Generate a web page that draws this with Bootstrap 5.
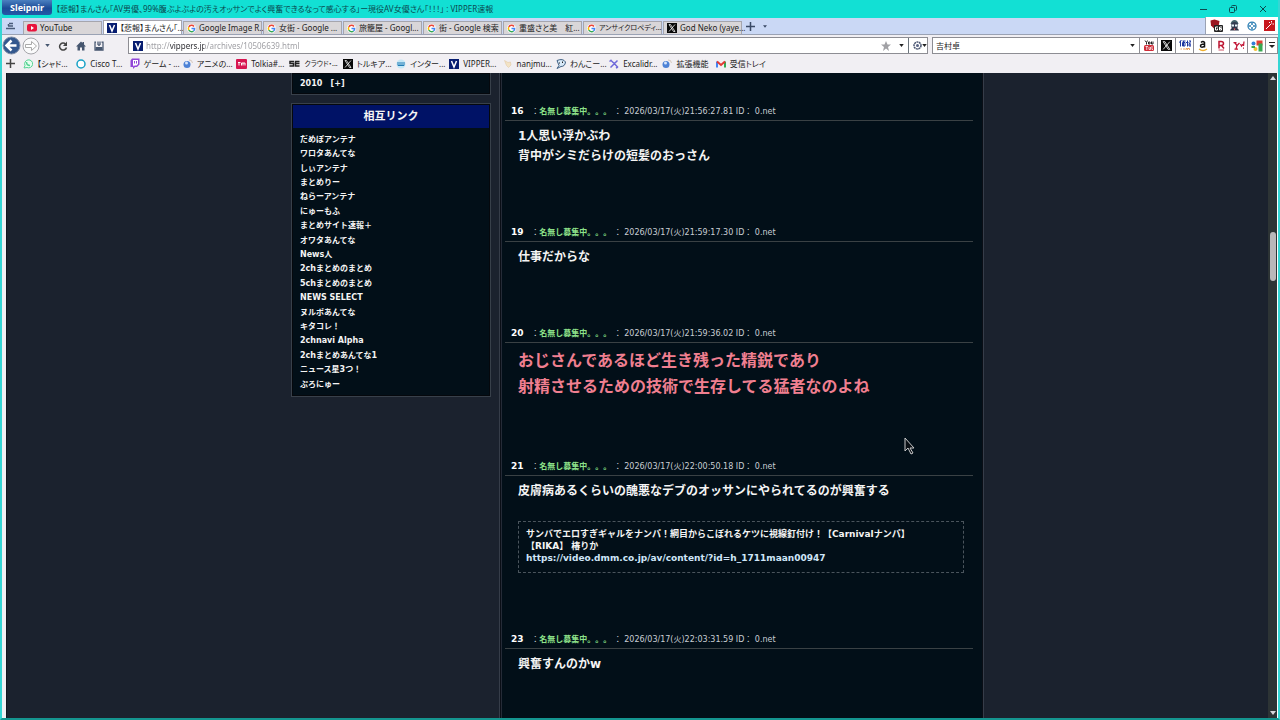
<!DOCTYPE html>
<html lang="ja">
<head>
<meta charset="utf-8">
<meta name="viewport" content="width=device-width, initial-scale=1">
<title>VIPPER速報</title>
<link href="https://cdn.jsdelivr.net/npm/bootstrap@5.3.0/dist/css/bootstrap.min.css" rel="stylesheet">
<style>
  :root { --teal:#12e0d4; --ui:"Noto Sans","Noto Sans CJK JP",sans-serif; --page:"DejaVu Sans","Noto Sans CJK JP",sans-serif; }
  body { background:#f1eff3; font-family:var(--ui); font-size:8px; line-height:12px; color:#222; font-feature-settings:"palt"; }
  a, a:hover { color:inherit; text-decoration:none; }
  button { border:0; background:none; padding:0; color:inherit; display:flex; align-items:center; justify-content:center; }
  svg { display:block; flex:none; }
  .win { border:solid #35d6d4; border-width:0 2px 2px; border-bottom-color:#14958f; }
  .titlebar { background:var(--teal); height:18px; font-size:8px; color:#0b4a50; }
  .brand { width:50px; height:15px; background:linear-gradient(#4b80c0,#1c4a96 55%,#2459a8); border-radius:0 0 3px 3px; color:#fff; font-weight:700; font-size:9px; }
  .winbtn { width:30px; height:18px; color:#0b4a50; }
  .tabbar { height:17px; background:#cad8f5; border-bottom:1px solid #9aa2b4; }
  .tabs { gap:1px; }
  .tab-i { width:79px; height:13px; padding:0 1px 0 3px; gap:3px; background:#d9d6d8; border:1px solid #a5a5ad; border-bottom:0; }
  .tab-i.on { background:#fff; height:14px; }
  .tab-i.dense, .marks-grid .dense { font-size:7px; }
  .addons { background:#fff; width:73px; border-left:1px solid #9aa2b4; padding:0 3px 0 4px; height:17px; }
  .tools { height:20px; padding:2px 0 1px; }
  .navs { width:126px; color:#46566f; }
  .field { background:#fff; border:1px solid #8d8d93; height:17px; }
  .field input { border:0; outline:0; min-width:0; font-size:8px; line-height:12px; padding:0 3px; color:#222; background-color:transparent; }
  .field .url { background:linear-gradient(90deg,#9a9a9f 27px,#26262b 27px 61px,#9a9a9f 61px); -webkit-background-clip:text; background-clip:text; color:transparent; }
  .search { width:346px; }
  .search button { width:18px; height:15px; border-left:1px solid #8d8d93; flex:none; }
  .search .more { width:12px; }
  .marks { height:18px; }
  .marks-grid { display:grid; grid-template-columns:repeat(14,minmax(0,1fr)); width:746px; }
  .marks-grid a { display:flex; align-items:center; gap:4px; min-width:0; }
  .view { background:#1b222e; margin-left:4px; border-left:1px solid #10151d; font-family:var(--page); color:#f4f4f4; font-feature-settings:normal; }
  .site { width:693px; gap:8px; }
  .side { width:200px; font-size:8px; font-weight:700; line-height:14px; }
  .main-col { background:#020f18; border:solid #363d49; border-width:0 1px; box-shadow:inset 1px 0 #0a0e16, inset 2px 0 #252b37, inset -1px 0 #0a0e16; padding:27px 10px 0 5px; }
  .panel { background:#020f18; border:1px solid #38404a; box-shadow:inset 0 0 0 1px #05080d; padding:1px; }
  .years { height:22px; border-top:0; line-height:14px; padding:0 9px 3px 8px; }
  .panel h2 { background:#001266; font-size:11px; line-height:22px; font-weight:700; margin:0 0 5px; padding-top:1px; text-align:center; }
  .mutual { min-height:259px; padding:0 7px; margin:0 0 3px; }
  .post { margin-bottom:55px; }
  .post header { height:21px; border-bottom:1px solid #3a4144; padding-left:6px; font-size:8px; line-height:22px; color:#c9ced4; white-space:pre; }
  .post header b { font-size:9px; color:#fff; }
  .post header .who { color:#8ee28a; font-weight:700; }
  .post .txt { padding:5px 9px 0 13px; font-size:12px; line-height:20px; font-weight:700; margin:0; }
  .post .txt.big { font-size:16px; line-height:26px; color:#f07f90; }
  .ad { margin:20px 9px 0 13px; border:1px dashed #4a545c; padding:6px 7px 7px; font-size:9px; line-height:12px; min-height:52px; font-weight:700; }
  .ad a { color:#cfe6f8; display:block; line-height:13px; }
  .bar { width:9px; background:#2d3435; color:#d6d6da; padding:3px 0; }
  .bar .up { flex:151 0 0; } .bar .down { flex:427 0 0; }
  .thumb { width:6px; flex:49 0 0; background:#b9b7b9; border-radius:3px; }
  .pointer { position:absolute; left:calc(50% + 264px); top:437px; }
  .edge { width:1px; background:#fff; }
</style>
</head>
<body>
<svg width="0" height="0" class="position-absolute" aria-hidden="true">
  <symbol id="g" viewBox="0 0 18 18"><circle cx="9" cy="9" r="9" fill="#fff"/><g fill="none" stroke-width="3"><path d="M14 5A6.2 6.2 0 0 0 3.600 6" stroke="#ea4335"/><path d="M3.600 6A6.200 6.200 0 0 0 3.600 12" stroke="#fbbc05"/><path d="M3.600 12A6.200 6.200 0 0 0 13 14" stroke="#34a853"/><path d="M13 14A6 6 0 0 0 15.200 9H9" stroke="#4285f4"/></g></symbol>
  <symbol id="x" viewBox="0 0 20 20"><path fill="#080808" d="M0 0h20v20H0z"/><path d="M4 3l9 14h3L7 3zM16 3L4 17" fill="none" stroke="#fff" stroke-width="1.500"/></symbol>
  <symbol id="v" viewBox="0 0 20 20"><path fill="#071d70" d="M0 0h20v20H0z"/><path d="M5 4l5 12 5-12" fill="none" stroke="#fff" stroke-width="3"/></symbol>
  <symbol id="orb" viewBox="0 0 20 20"><circle cx="8" cy="11" r="7" fill="#4d82d6"/><circle cx="7" cy="8" r="3" fill="#d5e5fc"/><path d="M12 2q6-1 7 6" fill="none" stroke="#d6c9bd" stroke-width="2"/></symbol>
  <symbol id="tri" viewBox="0 0 6 4"><path d="M0 0h6L3 4z" fill="currentColor"/></symbol>
</svg>
<div class="win vh-100 d-flex flex-column overflow-hidden">
  <div class="titlebar d-flex align-items-center">
    <div class="brand d-flex align-items-center justify-content-center align-self-start">Sleipnir</div>
    <div class="flex-fill text-truncate ps-1">【悲報】まんさん「AV男優、99%腹ぶよぶよの汚えオッサンでよく興奮できるなって感心する」ー現役AV女優さん「！！！」 : VIPPER速報</div>
    <button class="winbtn" aria-label="最小化"><svg width="7" height="7"><path d="M0 3.500h7" stroke="currentColor"/></svg></button>
    <button class="winbtn" aria-label="元に戻す"><svg width="8" height="8" fill="none" stroke="currentColor"><rect x=".5" y="2.500" width="5" height="5" rx="1"/><path d="M2.500 1.500q0-1 1-1h3q1 0 1 1v3q0 1-1 1"/></svg></button>
    <button class="winbtn" aria-label="閉じる"><svg width="8" height="8"><path d="M1 1l6 6M7 1L1 7" stroke="currentColor"/></svg></button>
  </div>
  <nav class="tabbar d-flex align-items-end" aria-label="タブ">
    <button class="align-self-center ms-1 me-2" aria-label="タブ一覧"><svg width="9" height="8" viewBox="0 0 9 8" fill="none" stroke="#4a5b7a"><path d="M3 1.500h4M2 4h5M0 6.500h9M2.500 2v2" stroke-width="1.500"/></svg></button>
    <div class="tabs d-flex align-items-end text-nowrap">
      <a href="#" class="tab-i d-flex align-items-center"><svg width="10" height="8" viewBox="0 0 20 16"><rect width="20" height="15" rx="4" fill="#e8133c"/><path d="M8 4l6 4-6 4z" fill="#fff"/></svg><span>YouTube</span></a>
      <a href="#" class="tab-i on d-flex align-items-center"><svg width="10" height="10"><use href="#v"/></svg><span>【悲報】まんさん「...</span></a>
      <a href="#" class="tab-i d-flex align-items-center"><svg width="9" height="9"><use href="#g"/></svg><span>Google Image R...</span></a>
      <a href="#" class="tab-i d-flex align-items-center"><svg width="9" height="9"><use href="#g"/></svg><span>女街 - Google ...</span></a>
      <a href="#" class="tab-i d-flex align-items-center"><svg width="9" height="9"><use href="#g"/></svg><span>旅籠屋 - Googl...</span></a>
      <a href="#" class="tab-i d-flex align-items-center"><svg width="9" height="9"><use href="#g"/></svg><span>街 - Google 検索</span></a>
      <a href="#" class="tab-i d-flex align-items-center"><svg width="9" height="9"><use href="#g"/></svg><span>重盛さと美　紅...</span></a>
      <a href="#" class="tab-i dense d-flex align-items-center"><svg width="9" height="9"><use href="#g"/></svg><span>アンサイクロペディ...</span></a>
      <a href="#" class="tab-i d-flex align-items-center"><svg width="10" height="10"><use href="#x"/></svg><span>God Neko (yaye...</span></a>
    </div>
    <button class="align-self-center ms-1" aria-label="新しいタブ"><svg width="9" height="9"><path d="M4.500 0v9M0 4.500h9" stroke="#3b4a66" stroke-width="1.500"/></svg></button>
    <button class="align-self-center ms-2" aria-label="タブメニュー"><svg width="4" height="3" color="#3b4a66"><use href="#tri"/></svg></button>
    <div class="addons ms-auto d-flex align-items-center justify-content-between">
      <button aria-label="ブロック"><svg width="13" height="13" viewBox="0 0 26 26"><path d="M1 3l8-2 10 3-2 12-9 3-6-6z" fill="#9b1722"/><rect x="8" y="12" width="18" height="14" rx="2" fill="#222"/><path d="M16 16h-5v6h4v-3M24 16h-5v6h4v-3h-4" fill="none" stroke="#fff" stroke-width="2"/></svg></button>
      <button aria-label="エージェント"><svg width="9" height="11" viewBox="0 0 18 22"><path d="M1 8Q3 0 9 0t8 8z" fill="#43636c"/><circle cx="9" cy="11" r="7" fill="#343b50"/><path d="M3 9h5v4H3zm7 0h5v4h-5z" fill="#e7f5f7"/><path d="M0 21q2-6 9-6t9 6z" fill="#2c3044"/><path d="M7 17h4l-2 4z" fill="#f66"/></svg></button>
      <button aria-label="ターゲット"><svg width="10" height="10" viewBox="0 0 20 20"><circle cx="10" cy="10" r="8" fill="none" stroke="#2f80b4" stroke-width="2.500"/><path d="M10 3v5M10 12v5M3 10h5M12 10h5" stroke="#2f80b4" stroke-width="3"/></svg></button>
      <button aria-label="マジック"><svg width="11" height="11" viewBox="0 0 22 22"><path d="M0 0h22v22H0z" fill="#c8171e"/><path d="M4 18L15 7M15 2v3M17 8h3M10 4l2 2" stroke="#fff" stroke-width="2"/></svg></button>
    </div>
  </nav>
  <div class="tools d-flex align-items-center">
    <div class="navs d-flex align-items-center">
      <button aria-label="戻る"><svg width="19" height="19" viewBox="0 0 38 38"><circle cx="19" cy="19" r="17" fill="#34588e" stroke="#7e8da6" stroke-width="2"/><path d="M19 9L9 19l10 10M10 19h19" fill="none" stroke="#fff" stroke-width="5"/></svg></button>
      <button aria-label="進む" class="ms-0"><svg width="20" height="18" viewBox="0 0 36 36"><circle cx="18" cy="18" r="16" fill="#fafafb" stroke="#a5a5aa" stroke-width="2"/><path d="M7 15h12V9l10 9-10 9v-6H7z" fill="#fff" stroke="#aaa" stroke-width="2"/></svg></button>
      <button aria-label="履歴" class="ms-1"><svg width="5" height="3"><use href="#tri"/></svg></button>
      <button aria-label="更新" class="ms-2"><svg width="10" height="10" viewBox="0 0 20 20"><path d="M15 6A7 7 0 1 0 17 13" fill="none" stroke="#444" stroke-width="3"/><path d="M18 1v9h-8z" fill="#444"/></svg></button>
      <button aria-label="ホーム" class="ms-2"><svg width="10" height="10" viewBox="0 0 20 20" fill="#46566f"><path d="M10 1L0 11h3v8h5v-6h4v6h5v-8h3l-4-4V2h-3v2z"/></svg></button>
      <button aria-label="保存" class="ms-2"><svg width="10" height="10" viewBox="0 0 20 20"><path d="M4 2H2v16h16V2h-3M8 1v7M12 1v7M8 8h4" fill="none" stroke="#46566f" stroke-width="2.500"/><path d="M3 12h14v6H3z" fill="#46566f"/></svg></button>
    </div>
    <div class="field flex-fill d-flex align-items-center ps-1">
      <svg width="10" height="10" viewBox="0 0 20 20"><use href="#v"/></svg>
      <input class="url flex-fill ms-0" aria-label="アドレス" value="http://vippers.jp/archives/10506639.html">
      <button aria-label="お気に入り"><svg width="10" height="10" viewBox="0 0 20 20"><path d="M10 0l3 7h7l-6 5 2 8-6-5-6 5 2-8-6-5h7z" fill="#a1a1a5"/></svg></button>
      <button aria-label="候補" class="ms-2 me-0"><svg width="5" height="3"><use href="#tri"/></svg></button>
      <button aria-label="エンジン" class="border-start border-secondary ms-1 h-100"><svg class="ms-1" width="9" height="9" viewBox="0 0 18 18"><circle cx="9" cy="9" r="7" fill="none" stroke="#4a5570" stroke-width="3" stroke-dasharray="4 1"/><circle cx="9" cy="9" r="3" fill="#596586"/></svg><svg width="5" height="3"><use href="#tri"/></svg></button>
    </div>
    <div class="field search d-flex align-items-center ms-1">
      <input class="flex-fill" aria-label="検索" value="吉村卓">
      <svg class="me-1" width="5" height="3"><use href="#tri"/></svg>
      <button aria-label="YouTube"><svg width="10" height="12" viewBox="0 0 20 24"><path d="M2 1l3 4 2-4M5 5v4M9 4h3v4H9zM15 3v5h3V3" fill="none" stroke="#222" stroke-width="2"/><rect y="10" width="20" height="12" rx="3" fill="#cf2c38"/><path d="M3 13h5M5.500 13v7M10 14v5h3v-5M16 12v7h2" fill="none" stroke="#fff" stroke-width="1.500"/></svg></button>
      <button aria-label="X"><svg width="11" height="11"><use href="#x"/></svg></button>
      <button aria-label="価格.com"><svg width="12" height="11" viewBox="0 0 24 22"><path d="M3 1v12M0 5l5-4M7 2h6M7 5h5v7H7zM9 2v10M17 1v12M14 5h5M20 2h4l-4 6M20 8h4v4h-4z" fill="none" stroke="#1c36a0" stroke-width="2"/><path d="M3 18h3M8 18h4M14 20v-3h3v3m0-3h4v3" fill="none" stroke="#e8a060" stroke-width="2"/></svg></button>
      <button aria-label="Amazon"><svg width="10" height="12" viewBox="0 0 20 24"><path d="M6 5q4-4 7 0v10M13 8Q5 8 5 12t8 1" fill="none" stroke="#111" stroke-width="3"/><path d="M2 18q8 6 16 0" fill="none" stroke="#efae2c" stroke-width="2.500"/></svg></button>
      <button aria-label="楽天"><svg width="8" height="11" viewBox="0 0 16 22"><path d="M4 17V3h4q5 0 5 4t-5 4H4m5 0l5 6" fill="none" stroke="#bd1632" stroke-width="3"/><path d="M3 20h11" stroke="#bd1632" stroke-width="1.500"/></svg></button>
      <button aria-label="Yahoo"><svg width="12" height="9" viewBox="0 0 24 18"><path d="M1 3h6M3 3l5 6 5-5M8 9l-2 7M3 16h7M15 6l2 4 3-4M22 1l-1 9M20 14h2" fill="none" stroke="#c21535" stroke-width="2.500"/></svg></button>
      <button aria-label="マップ"><svg width="12" height="12" viewBox="0 0 24 24"><path d="M11 1h12v10H11z" fill="#e33d34"/><path d="M15 7h8v16h-8z" fill="#38a852"/><circle cx="5" cy="7" r="4" fill="#347ed8"/><circle cx="9" cy="18" r="4" fill="#f5bf35"/><path d="M1 12h7v4H1z" fill="#38a852"/></svg></button>
      <button class="more" aria-label="その他"><svg width="6" height="7" viewBox="0 0 6 7"><path d="M0 .5h6" stroke="#222"/><path d="M0 3h6L3 6z" fill="#222"/></svg></button>
    </div>
  </div>
  <div class="marks d-flex align-items-center">
    <button class="ms-1" aria-label="追加"><svg width="9" height="9"><path d="M4.500 0v9M0 4.500h9" stroke="#444" stroke-width="1.500"/></svg></button>
    <nav class="marks-grid ms-2 text-nowrap" aria-label="ブックマーク">
      <a href="#"><svg width="10" height="10" viewBox="0 0 20 20"><path d="M2 18l2-5a8 8 0 1 1 4 4z" fill="#e6fff1" stroke="#56d393" stroke-width="2"/><path d="M7 6q0 7 7 7" stroke="#56d393" stroke-width="3" fill="none"/></svg><span>【シャド...</span></a>
      <a href="#"><svg width="10" height="10" viewBox="0 0 20 20"><circle cx="10" cy="10" r="8" fill="#fff" stroke="#16a1c6" stroke-width="3"/></svg><span>Cisco T...</span></a>
      <a href="#"><svg width="10" height="11" viewBox="0 0 20 22"><path d="M4 1h15v12l-5 5h-4l-4 4v-4H1V5z" fill="#9146d8"/><path d="M6 4h10v8l-3 3H9l-2 2v-2H6z" fill="#fff"/><path d="M9 6v5M13 6v5" stroke="#9146d8" stroke-width="2"/></svg><span>ゲーム - ...</span></a>
      <a href="#"><svg width="10" height="10"><use href="#orb"/></svg><span>アニメの...</span></a>
      <a href="#"><svg width="11" height="10" viewBox="0 0 22 20"><rect width="22" height="20" rx="2" fill="#d71651"/><path d="M4 7h5M6 7v6M11 13V8h3v5m0-5h4v5" fill="none" stroke="#fff" stroke-width="2"/></svg><span>Tolkia#...</span></a>
      <a href="#" class="dense"><svg width="11" height="9" viewBox="0 0 22 18"><path d="M10 5H2v4h7v5H1M21 5h-8v9h8M13 9h8" fill="none" stroke="#222" stroke-width="3"/></svg><span>クラウド・...</span></a>
      <a href="#"><svg width="10" height="10"><use href="#x"/></svg><span>トルキア...</span></a>
      <a href="#"><svg width="10" height="10" viewBox="0 0 20 20"><circle cx="10" cy="10" r="9" fill="#c5e7f6"/><path d="M4 6v7h4V6m0 7h4V6m0 7h4V6" fill="none" stroke="#237cb5" stroke-width="2"/></svg><span>インター...</span></a>
      <a href="#"><svg width="10" height="10"><use href="#v"/></svg><span>VIPPER...</span></a>
      <a href="#"><svg width="10" height="10" viewBox="0 0 20 20"><path d="M3 3l7 4 5-1 1 6-5 5-4-4z" fill="#f3e3c6" stroke="#dfc49c"/></svg><span>nanjmu...</span></a>
      <a href="#"><svg width="10" height="10" viewBox="0 0 20 20"><path d="M2 3q12-5 17 3-1 9-9 9l-8 4 4-6z" fill="#d8e9f8" stroke="#416083" stroke-width="2"/><path d="M7 7v2M13 5v3" stroke="#222" stroke-width="2"/></svg><span>わんこー...</span></a>
      <a href="#"><svg width="10" height="10" viewBox="0 0 20 20"><path d="M3 2q8 7 15 15M17 3L3 17M1 5l4-3M14 18l4-2" stroke="#6e68d9" stroke-width="3" fill="none"/></svg><span>Excalidr...</span></a>
      <a href="#"><svg width="10" height="10"><use href="#orb"/></svg><span>拡張機能</span></a>
      <a href="#"><svg width="10" height="8" viewBox="0 0 20 16"><path d="M2 15V3" stroke="#4285f4" stroke-width="4"/><path d="M18 15V3" stroke="#34a853" stroke-width="4"/><path d="M2 3l8 7 8-7" fill="none" stroke="#e43a34" stroke-width="4"/></svg><span>受信トレイ</span></a>
    </nav>
  </div>
  <div class="view flex-fill d-flex overflow-hidden">
    <div class="flex-fill d-flex justify-content-center overflow-hidden">
      <div class="site d-flex">
        <aside class="side">
          <div class="panel years d-flex flex-column justify-content-end overflow-hidden mb-2">
            <a href="#">2011 &nbsp; [+]</a><a href="#">2010 &nbsp; [+]</a>
          </div>
          <section class="panel">
            <h2>相互リンク</h2>
            <ul class="mutual list-unstyled d-flex flex-column justify-content-between">
              <li><a href="#">だめぽアンテナ</a></li><li><a href="#">ワロタあんてな</a></li><li><a href="#">しぃアンテナ</a></li><li><a href="#">まとめりー</a></li><li><a href="#">ねらーアンテナ</a></li><li><a href="#">にゅーもふ</a></li><li><a href="#">まとめサイト速報＋</a></li><li><a href="#">オワタあんてな</a></li><li><a href="#">News人</a></li><li><a href="#">2chまとめのまとめ</a></li><li><a href="#">5chまとめのまとめ</a></li><li><a href="#">NEWS SELECT</a></li><li><a href="#">ヌルポあんてな</a></li><li><a href="#">キタコレ！</a></li><li><a href="#">2chnavi Alpha</a></li><li><a href="#">2chまとめあんてな1</a></li><li><a href="#">ニュース星3つ！</a></li><li><a href="#">ぷろにゅー</a></li>
            </ul>
          </section>
        </aside>
        <main class="main-col flex-fill">
          <article class="post"><header><b>16</b>   ：<span class="who">名無し募集中。。。</span> ： 2026/03/17(火)21:56:27.81 ID： 0.net</header><p class="txt">1人思い浮かぶわ<br>背中がシミだらけの短髪のおっさん</p></article>
          <article class="post"><header><b>19</b>   ：<span class="who">名無し募集中。。。</span> ： 2026/03/17(火)21:59:17.30 ID： 0.net</header><p class="txt">仕事だからな</p></article>
          <article class="post"><header><b>20</b>   ：<span class="who">名無し募集中。。。</span> ： 2026/03/17(火)21:59:36.02 ID： 0.net</header><p class="txt big">おじさんであるほど生き残った精鋭であり<br>射精させるための技術で生存してる猛者なのよね</p></article>
          <article class="post"><header><b>21</b>   ：<span class="who">名無し募集中。。。</span> ： 2026/03/17(火)22:00:50.18 ID： 0.net</header><p class="txt">皮膚病あるくらいの醜悪なデブのオッサンにやられてるのが興奮する</p>
            <div class="ad">サンバでエロすぎギャルをナンパ！網目からこぼれるケツに視線釘付け！【Carnivalナンパ】<br>【RIKA】 椿りか<a href="#">https://video.dmm.co.jp/av/content/?id=h_1711maan00947</a></div></article>
          <article class="post"><header><b>23</b>   ：<span class="who">名無し募集中。。。</span> ： 2026/03/17(火)22:03:31.59 ID： 0.net</header><p class="txt">興奮すんのかw</p></article>
        </main>
      </div>
    </div>
    <div class="bar d-flex flex-column align-items-center">
      <svg width="6" height="5"><path d="M0 4h6L3 0z" fill="currentColor"/></svg>
      <div class="up"></div><div class="thumb"></div><div class="down"></div>
      <svg width="6" height="5"><path d="M0 1h6L3 5z" fill="currentColor"/></svg>
    </div>
    <div class="edge"></div>
  </div>
</div>
<svg class="pointer" width="11" height="18" viewBox="0 0 11 18"><path d="M1 1v13l3-3 3 6 2-1-3-5h4z" fill="#0a0f14" stroke="#c9c9c9"/></svg>
<script src="https://cdn.jsdelivr.net/npm/bootstrap@5.3.0/dist/js/bootstrap.bundle.min.js"></script>
</body>
</html>
